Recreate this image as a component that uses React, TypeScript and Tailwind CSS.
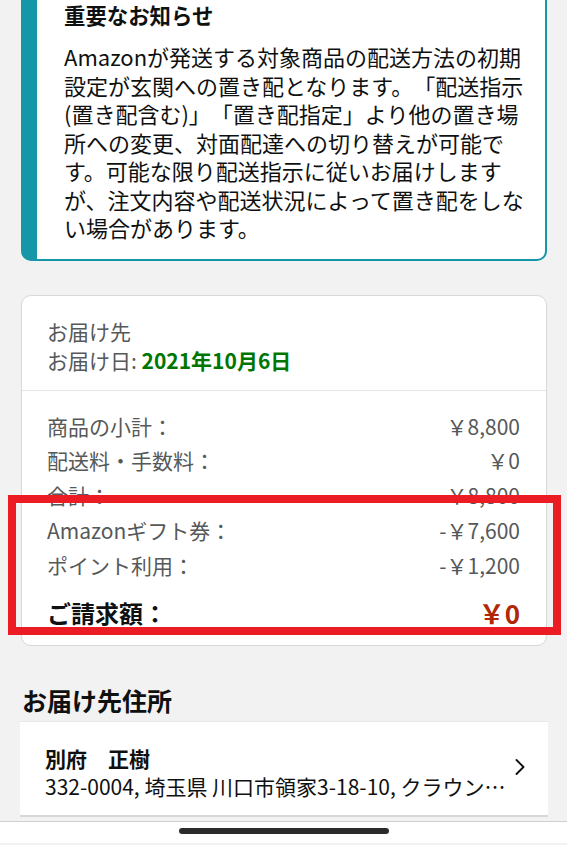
import { ChevronRight } from 'lucide-react';

const noticeLines = [
  'Amazonが発送する対象商品の配送方法の初期',
  '設定が玄関への置き配となります。「配送指示',
  '(置き配含む)」「置き配指定」より他の置き場',
  '所への変更、対面配達への切り替えが可能で',
  'す。可能な限り配送指示に従いお届けします',
  'が、注文内容や配送状況によって置き配をしな',
  'い場合があります。',
];

const summaryRows = [
  { label: '商品の小計：', value: '￥8,800' },
  { label: '配送料・手数料：', value: '￥0' },
  { label: '合計：', value: '￥8,800' },
  { label: 'Amazonギフト券：', value: '-￥7,600' },
  { label: 'ポイント利用：', value: '-￥1,200' },
];

export default function App() {
  return (
    <div className="relative w-[567px] h-[845px] overflow-hidden bg-[#f2f2f2] font-['Noto_Sans_CJK_JP','Noto_Sans',sans-serif] text-[#0f1111] [text-spacing-trim:space-all]">
      <div className="pl-[21px] pr-[20px]">
        {/* notice */}
        <div className="-mt-[17px] bg-white border-2 border-l-[16px] border-[#1597a8] rounded-b-[10px] pl-[27px] pr-[4px] pt-[16px] pb-[17px]">
          <h3 className="text-[21.4px] leading-[28px] font-bold">重要なお知らせ</h3>
          <p className="mt-[13px] text-[22px] leading-[28.5px] whitespace-nowrap">
            {noticeLines.map((l) => (
              <span key={l} className="block">{l}</span>
            ))}
          </p>
        </div>

        {/* order summary */}
        <div className="relative mt-[34px] bg-white border border-[#d5d9d9] rounded-[10px]">
          <div className="pl-[25px] pr-[26px] pt-[21px] pb-[15px] border-b border-[#e3e6e6] text-[21px] leading-[29px] text-[#565959]">
            <div>お届け先</div>
            <div>
              お届け日: <span className="font-bold text-[#007600]">2021年10月6日</span>
            </div>
          </div>
          <div className="pl-[25px] pr-[26px] pt-[18px] pb-[16px]">
            {summaryRows.map((r) => (
              <div key={r.label} className="flex justify-between text-[21px] leading-[34.75px] text-[#565959]">
                <span>{r.label}</span>
                <span>{r.value}</span>
              </div>
            ))}
            <div className="mt-[15px] flex justify-between items-center leading-[32px]">
              <span className="text-[24px] font-bold">ご請求額：</span>
              <span className="text-[26px] font-bold text-[#b12704]">￥0</span>
            </div>
          </div>
          {/* annotation */}
          <div className="absolute left-[-14px] top-[199px] w-[553px] h-[140px] border-[8px] border-[#ec1c24]" />
        </div>

        <h2 className="mt-[38px] pl-[1px] text-[25px] leading-[32px] font-bold">お届け先住所</h2>

        <div className="relative mt-[5px] -ml-[1px] -mr-[1px] bg-white border-t border-[#e7e9e9] border-b-2 border-b-[#d5d9d9] pl-[25px] pr-[27px] pt-[22px] pb-[15px]">
          <div className="text-[21px] leading-[28px] font-bold">別府　正樹</div>
          <div className="text-[21px] leading-[28px] truncate">332-0004, 埼玉県 川口市領家3-18-10, クラウンハイツ川口 203</div>
          <ChevronRight className="absolute right-[14px] top-[31px] w-[28px] h-[28px] text-[#0f1111]" strokeWidth={1.6} />
        </div>
      </div>

      <div className="mt-[4px] h-[22px] bg-white border-t border-[#d0d0d0] flex justify-center">
        <div className="mt-[6px] w-[210px] h-[6px] rounded-full bg-[#2b2b2b]" />
      </div>
    </div>
  );
}
